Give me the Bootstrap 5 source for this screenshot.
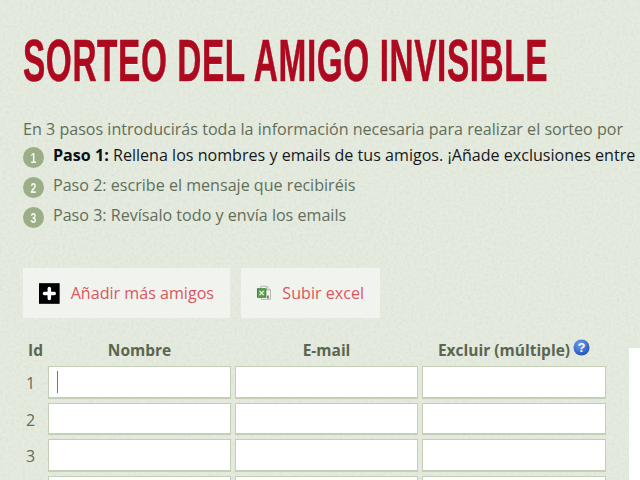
<!DOCTYPE html>
<html lang="es">
<head>
<meta charset="utf-8">
<title>Sorteo del amigo invisible</title>
<link href="https://cdn.jsdelivr.net/npm/bootstrap@5.3.0/dist/css/bootstrap.min.css" rel="stylesheet">
<style>
html,body{height:480px;overflow:hidden}
body{font-family:"Open Sans",sans-serif;color:#626e59;font-size:16.100px;line-height:30px;
background-color:#e5ebdf;
background-image:url("data:image/svg+xml,%3Csvg xmlns='http://www.w3.org/2000/svg' width='640' height='480'%3E%3Cfilter id='n'%3E%3CfeTurbulence type='fractalNoise' baseFrequency='.35' numOctaves='4' seed='4'/%3E%3CfeColorMatrix values='0 0 0 0 .5 0 0 0 0 .55 0 0 0 0 .45 0 0 0 .4 -.15'/%3E%3C/filter%3E%3Crect width='640' height='480' filter='url(%23n)'/%3E%3C/svg%3E");}
.page-wrap{width:640px;padding:39px 0 0 23px;white-space:nowrap}
.big-title{margin:0;height:43px;line-height:43px;color:#ad0a20;font-family:"Liberation Sans",sans-serif;font-weight:700;font-size:60px;letter-spacing:1px;-webkit-text-stroke:.6px #ad0a20;text-shadow:1px 1px 0 #f6f8f3;transform-origin:0 50%;transform:scaleX(.557);width:max-content}
.intro-line{margin:35px 0 0;line-height:24px}
.step-list{margin:-1px 0 0;padding:0;list-style:none}
.step-item{height:30px;gap:9px}
.step-item.now{color:#14181a}
.step-item.now b{font-weight:700;color:#0c0f12}
.step-num{width:21px;height:21px;margin-top:4px;border-radius:50%;background:#9bae87;color:#f3f5ee;font:700 15px/21px "Liberation Sans",sans-serif;text-align:center;flex:none}
.step-num i{display:block;font-style:normal;transform:scaleX(.7)}
.action-row{margin-top:38px;gap:11px}
.act-btn{height:50px;background:#f1f3ee;color:#d9575f;font-size:16.100px;gap:11px;padding:0 16px;border:0;border-radius:0;text-decoration:none}
.act-btn:hover{background:#f1f3ee;color:#d9575f}
.act-one{width:207px}
.act-two{width:139px}
.grid-area{margin-top:20px}
.friend-grid{width:583px;display:grid;grid-template-columns:21px 183px 183px 184px;column-gap:4px;row-gap:4px;margin:0}
.col-head{font-weight:700;color:#5a6650;text-align:center;line-height:24px;height:24px;font-size:15.500px}
.col-head.id-h{text-align:left;padding-left:5px}
.help-dot{display:inline-block;vertical-align:top;margin:1px 0 0 3px}
.row-id{font-size:16px;height:32.500px;padding:1px 0 0 3px;line-height:32px;box-sizing:border-box;color:#626e59;overflow:visible}
.name-in{height:32.500px;width:100%;border:1px solid #c3d0b6;border-bottom-width:2px;background:#fff;border-radius:0;padding:0 8px;outline:0;display:block}
.cursor-bar{display:block;width:1px;height:22px;background:#777;margin:4px 0 0 0}
.side-panel{width:30px;height:140px;background:#fff;margin:10px 0 0 23px;flex:none}
</style>
</head>
<body>
<div class="page-wrap">
  <h1 class="big-title">SORTEO DEL AMIGO INVISIBLE</h1>
  <p class="intro-line">En 3 pasos introducirás toda la información necesaria para realizar el sorteo por</p>
  <ol class="step-list">
    <li class="step-item now d-flex align-items-center"><span class="step-num"><i>1</i></span><span><b>Paso 1:</b> Rellena los nombres y emails de tus amigos. ¡Añade exclusiones entre</span></li>
    <li class="step-item d-flex align-items-center"><span class="step-num"><i>2</i></span><span>Paso 2: escribe el mensaje que recibiréis</span></li>
    <li class="step-item d-flex align-items-center"><span class="step-num"><i>3</i></span><span>Paso 3: Revísalo todo y envía los emails</span></li>
  </ol>
  <div class="action-row d-flex">
    <a href="#" class="btn act-btn act-one d-flex align-items-center">
      <svg width="21" height="21" viewBox="0 0 21 21"><rect width="21" height="21" fill="#000"/><path d="M10.500 5.500v10M5.500 10.500h10" stroke="#fff" stroke-width="3.600" stroke-linecap="round"/></svg>
      Añadir más amigos</a>
    <a href="#" class="btn act-btn act-two d-flex align-items-center">
      <svg width="18" height="18" viewBox="0 0 17 17"><path d="M4.500 .5h7l4.500 4.500v11h-11z" fill="#f4f4f0" stroke="#a9aea6"/><path d="M11.500 .5v4.500h4.500" fill="#dcdfd8" stroke="#a9aea6"/><rect x=".5" y="3.500" width="10" height="10" fill="#5da24f" stroke="#2f7436"/><path d="M3 6l5 5M8 6l-5 5" stroke="#eaf5e2" stroke-width="1.500"/><path d="M13 11.500v3.500" stroke="#222" stroke-width="1.300"/></svg>
      Subir excel</a>
  </div>
  <div class="grid-area d-flex">
    <form class="friend-grid" action="#">
      <div class="col-head id-h">Id</div>
      <div class="col-head">Nombre</div>
      <div class="col-head">E-mail</div>
      <div class="col-head">Excluir (múltiple)<svg class="help-dot" width="17" height="17" viewBox="0 0 17 17"><defs><radialGradient id="hb" cx=".4" cy=".3" r=".8"><stop offset="0" stop-color="#6f9ff0"/><stop offset="1" stop-color="#1c4cae"/></radialGradient></defs><circle cx="8.500" cy="8.500" r="8" fill="url(#hb)"/><text x="8.500" y="13" text-anchor="middle" fill="#fff" font-family="Liberation Sans" font-weight="700" font-size="12.500">?</text></svg></div>
      <div class="row-id">1</div><div class="name-in"><span class="cursor-bar"></span></div><input class="name-in" type="text" aria-label="E-mail 1"><input class="name-in" type="text" aria-label="Excluir 1">
      <div class="row-id">2</div><input class="name-in" type="text" aria-label="Nombre 2"><input class="name-in" type="text" aria-label="E-mail 2"><input class="name-in" type="text" aria-label="Excluir 2">
      <div class="row-id">3</div><input class="name-in" type="text" aria-label="Nombre 3"><input class="name-in" type="text" aria-label="E-mail 3"><input class="name-in" type="text" aria-label="Excluir 3">
      <div class="row-id"></div><input class="name-in" type="text" aria-label="Nombre 4"><input class="name-in" type="text" aria-label="E-mail 4"><input class="name-in" type="text" aria-label="Excluir 4">
    </form>
    <div class="side-panel"></div>
  </div>
</div>
<script src="https://cdn.jsdelivr.net/npm/bootstrap@5.3.0/dist/js/bootstrap.bundle.min.js"></script>
</body>
</html>
